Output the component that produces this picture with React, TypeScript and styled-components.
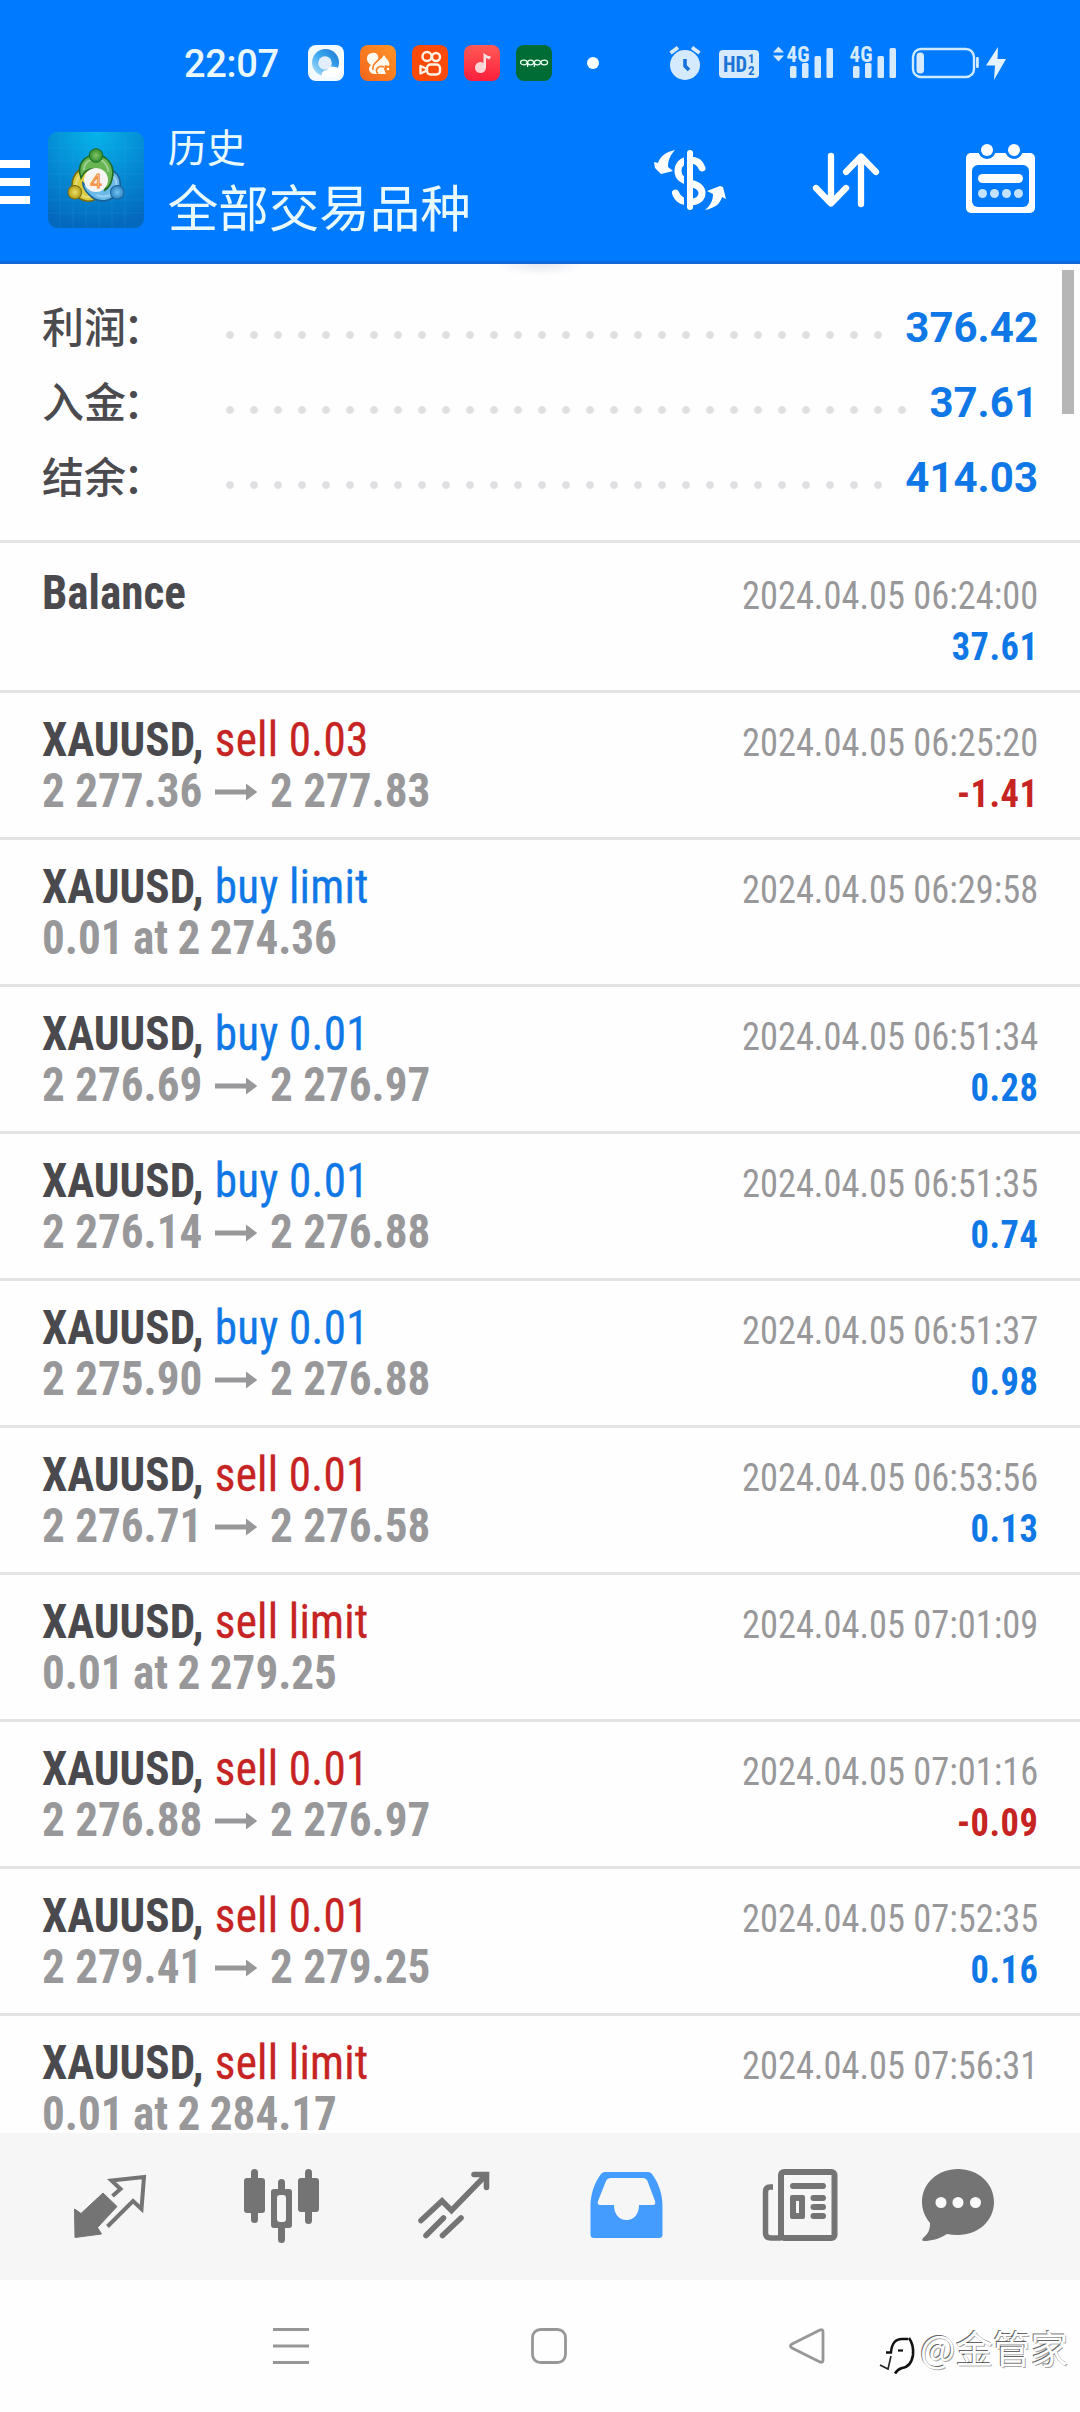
import React from "react";
import styled, { createGlobalStyle } from "styled-components";

const BLUE = "#007aff";
const LINK = "#0f78e6";
const RED = "#c62323";
const ICON = "#747474";

const GlobalStyle = createGlobalStyle`
  * { box-sizing: border-box; }
  body { margin: 0; background: #fff; }
  svg { display: block; flex: none; }
`;

const Screen = styled.div`
  width: 1080px;
  height: 2412px;
  display: flex;
  flex-direction: column;
  overflow: hidden;
  background: #fefefe;
  font-family: Roboto, "Noto Sans CJK SC", sans-serif;
`;

/* ---------- header ---------- */

const Header = styled.header`
  height: 264px;
  flex: none;
  background: ${BLUE};
  border-bottom: 3px solid #1268d6;
`;

const StatusBar = styled.div`
  height: 126px;
  display: flex;
  align-items: center;
  padding-left: 184px;
`;

const Clock = styled.span`
  width: 124px;
  font-size: 38px;
  font-weight: 500;
  letter-spacing: -0.3px;
  line-height: 44px;
  padding-top: 2px;
  color: #e9f8ff;
`;

const AppTray = styled.div`
  display: flex;
  gap: 16px;
`;

const MoreDot = styled.span`
  width: 12px;
  height: 12px;
  margin: 0 65px 0 35px;
  border-radius: 50%;
  background: #fff;
`;

const StatusIcons = styled.div`
  display: flex;
`;

const AppBar = styled.div`
  height: 135px;
  display: flex;
  align-items: flex-start;
  padding-top: 6px;
`;

const MenuButton = styled.div`
  width: 48px;
  height: 96px;
  display: flex;
  flex-direction: column;
  justify-content: center;
  gap: 10px;
  padding-top: 4px;
`;

const MenuBar = styled.span`
  width: 30px;
  height: 8px;
  background: #fff;
`;

const Titles = styled.div`
  width: 492px;
  padding-left: 24px;
  margin-top: -10px;
  color: #e9faff;
  font-family: "Noto Sans CJK SC", sans-serif;
`;

const Title = styled.div`
  font-size: 39px;
  line-height: 46px;
`;

const Subtitle = styled.div`
  font-size: 50.5px;
  line-height: 74px;
`;

const Actions = styled.div`
  display: flex;
`;

/* ---------- list ---------- */

const Content = styled.main`
  position: relative;
  height: 1869px;
  flex: none;
  overflow: hidden;
`;

const HeaderGlow = styled.div`
  position: absolute;
  top: 0;
  left: 495px;
  width: 90px;
  height: 12px;
  background: radial-gradient(ellipse at 50% 0, rgba(90, 100, 160, 0.14), transparent 70%);
`;

const Scrollbar = styled.div`
  position: absolute;
  top: 6px;
  right: 6px;
  width: 12px;
  height: 144px;
  background: #b6b6b6;
`;

const Summary = styled.section`
  height: 279px;
  padding: 26px 42px 0;
  border-bottom: 3px solid #e3e3e3;
`;

const SummaryRow = styled.div`
  height: 75px;
  display: flex;
  align-items: center;
`;

const SummaryLabel = styled.span`
  width: 176px;
  margin-top: -6px;
  font: 500 42px/60px "Noto Sans CJK SC", sans-serif;
  color: #4b4b4f;
`;

const Colon = styled.span`
  margin-left: -3px;
`;

const Leader = styled.span<{ $dots: number }>`
  width: ${(p) => p.$dots * 24}px;
  height: 24px;
  margin-top: 15px;
  background: radial-gradient(circle at 12px 12px, #dfdfe1 3.4px, transparent 4.4px) 0 0 / 24px 24px;
`;

const SummaryValue = styled.span`
  margin-left: auto;
  font-size: 42px;
  font-weight: 700;
  line-height: 51px;
  color: ${LINK};
`;

const Row = styled.section<{ $first?: boolean }>`
  height: ${(p) => (p.$first ? 150 : 147)}px;
  display: flex;
  justify-content: space-between;
  padding: ${(p) => (p.$first ? 24 : 21)}px 42px 0;
  border-bottom: 3px solid #e3e3e3;
  font-family: "Roboto Condensed", Roboto, sans-serif;
  white-space: nowrap;
`;

const Deal = styled.div`
  transform: scaleX(0.94);
  transform-origin: left;
`;

const Meta = styled.div`
  padding-top: 4px;
  text-align: right;
  transform: scaleX(0.934);
  transform-origin: right;
`;

const Symbol = styled.div`
  font-size: 48px;
  font-weight: 700;
  line-height: 51px;
  color: #4a4a4e;
`;

const Side = styled.span<{ $sell: boolean }>`
  margin-left: 1px;
  font-weight: 400;
  letter-spacing: 0.25px;
  color: ${(p) => (p.$sell ? RED : LINK)};
  -webkit-text-stroke: 0.3px currentColor;
`;

const Prices = styled.div`
  display: flex;
  align-items: center;
  font-size: 48px;
  font-weight: 700;
  line-height: 51px;
  color: #98989a;
`;

const Pending = styled.span`
  word-spacing: -1px;
`;

const Arrow = styled.svg`
  width: 45px;
  height: 18px;
  margin: 2px 13.5px 0;
`;

const DateText = styled.div`
  font-size: 39px;
  line-height: 51px;
  color: #98989a;
`;

const Profit = styled.div<{ $loss: boolean }>`
  font-size: 39px;
  font-weight: 700;
  letter-spacing: 0.5px;
  line-height: 51px;
  color: ${(p) => (p.$loss ? RED : LINK)};
`;

/* ---------- bottom ---------- */

const TabBar = styled.nav`
  height: 147px;
  flex: none;
  display: flex;
  padding-left: 24px;
  background: #f6f6f6;
`;

const SystemNav = styled.footer`
  height: 132px;
  flex: none;
  display: flex;
  align-items: flex-start;
  padding-top: 42px;
  background: #fefefe;
`;

const NavGroup = styled.div`
  width: 878px;
  display: flex;
  justify-content: space-between;
  padding: 0 50px 0 270px;
`;

const Watermark = styled.div`
  display: flex;
  align-items: center;
  height: 56px;
  margin-top: -3px;
  font: 400 37.5px/56px "Noto Sans CJK SC", sans-serif;
  color: #fff;
  white-space: nowrap;
  text-shadow: -1px -1px 0 rgba(0, 0, 0, 0.6), 1px 1px 0 rgba(0, 0, 0, 0.35);
`;

/* ---------- status bar icons ---------- */

const BrowserIcon = () => (
  <svg width="36" height="36" viewBox="0 0 36 36">
    <defs>
      <linearGradient id="ring" x1="0" y1="1" x2="1" y2="0">
        <stop offset="0" stopColor="#b9e6fb" />
        <stop offset="0.5" stopColor="#3fa9f0" />
        <stop offset="1" stopColor="#1775d2" />
      </linearGradient>
    </defs>
    <rect width="36" height="36" rx="8" fill="#f3fbff" />
    <circle cx="17.5" cy="17.5" r="13.500" fill="url(#ring)" />
    <circle cx="17" cy="18" r="6.800" fill="#e2effa" />
    <path d="M14 32a5 5 0 0 1 5-7a6 6 0 0 1 8-3a5 5 0 0 1 5 5a4 4 0 0 1-1 5z" fill="#fff" />
  </svg>
);

const SquirrelIcon = () => (
  <svg width="36" height="36" viewBox="0 0 36 36">
    <defs>
      <linearGradient id="uc" x1="0" y1="1" x2="1" y2="0">
        <stop offset="0" stopColor="#f4641c" />
        <stop offset="1" stopColor="#ff9526" />
      </linearGradient>
    </defs>
    <rect width="36" height="36" rx="8" fill="url(#uc)" />
    <path d="M14 29C8 28 8 22 11 20C5 17 6 8 12 8C18 6 20 13 17 17L22 13L24 10L26 13C29 16 30 18 29 21L25 20L24 24L26 29Z" fill="#fffaf0" />
    <path d="M13 25C12 19 16 18 20 13M18 29C14 24 19 20 24 22" stroke="#f9812a" strokeWidth="1.6" fill="none" />
    <circle cx="28" cy="24" r="1.3" fill="#fffaf0" />
  </svg>
);

const CameraIcon = () => (
  <svg width="36" height="36" viewBox="0 0 36 36">
    <rect width="36" height="36" rx="8" fill="#fb4a0a" />
    <g fill="none" stroke="#fff3e6" strokeWidth="2.4">
      <circle cx="15" cy="11.5" r="4.5" />
      <circle cx="24" cy="12" r="4" />
      <rect x="15" y="19.500" width="13" height="10" rx="3.500" />
      <path d="M8.500 21L14 23.500V26L8.500 28.500Z" strokeLinejoin="round" />
    </g>
  </svg>
);

const MusicIcon = () => (
  <svg width="36" height="36" viewBox="0 0 36 36">
    <defs>
      <linearGradient id="mus" x1="0" y1="0" x2="0" y2="1">
        <stop offset="0" stopColor="#ff5a56" />
        <stop offset="1" stopColor="#fb1f3c" />
      </linearGradient>
    </defs>
    <rect width="36" height="36" rx="8" fill="url(#mus)" />
    <circle cx="16.500" cy="22.500" r="5.500" fill="#ffd3d3" />
    <path d="M19.500 23V7.500C21 10 24 11 27 11.500L25.500 14.500L22 13V23Z" fill="#ffe0e0" />
  </svg>
);

const OppoIcon = () => (
  <svg width="36" height="36" viewBox="0 0 36 36">
    <rect width="36" height="36" rx="8" fill="#006c35" />
    <g fill="none" stroke="#e8fff0" strokeWidth="1.200">
      <ellipse cx="7.800" cy="17.500" rx="3.300" ry="2.300" />
      <ellipse cx="14.600" cy="17.500" rx="3" ry="2.300" />
      <ellipse cx="21.400" cy="17.500" rx="3" ry="2.300" />
      <ellipse cx="28.300" cy="17.500" rx="3.300" ry="2.300" />
      <path d="M11.600 17.500V22M18.400 17.500V22" />
    </g>
  </svg>
);

const TINT = "#d6eafd";

const AlarmIcon = () => (
  <svg width="50" height="46" viewBox="664 40 50 46">
    <circle cx="685" cy="65" r="15" fill={TINT} />
    <path d="M670.500 53L678 47.500M699.500 53L692 47.500" stroke={TINT} strokeWidth="3.800" />
    <path d="M685 59V66L689 70" stroke="#1571d9" strokeWidth="3.600" fill="none" />
  </svg>
);

const HdIcon = () => (
  <svg width="56" height="46" viewBox="714 40 56 46">
    <rect x="719" y="50" width="40" height="28" rx="4" fill={TINT} />
    <g fill="#1b74d8" fontFamily="Roboto Condensed, Roboto, sans-serif" fontWeight="700">
      <text x="723" y="72" fontSize="22" textLength="24" lengthAdjust="spacingAndGlyphs">HD</text>
      <text x="748" y="63" fontSize="13">1</text>
      <text x="748" y="75" fontSize="13">2</text>
    </g>
  </svg>
);

const SignalIcon = ({ data }: { data?: boolean }) => (
  <svg width={data ? 75 : 62} height="46" viewBox={data ? "770 40 75 46" : "782 40 62 46"}>
    {data && <path d="M773 52.500L778.500 46.500L784 52.500ZM773 55.500L778.500 61.500L784 55.500Z" fill={TINT} />}
    <text x="786.500" y="61.500" fontSize="22" fontWeight="700" fontFamily="Roboto Condensed, Roboto, sans-serif" textLength="23" lengthAdjust="spacingAndGlyphs" fill={TINT}>4G</text>
    <g fill={TINT}>
      <rect x="790" y="66" width="6.500" height="12" rx="1.500" />
      <rect x="802" y="63" width="6.500" height="15" rx="1.500" />
      <rect x="814.500" y="56" width="6.500" height="22" rx="1.500" />
      <rect x="826.500" y="48" width="6.500" height="30" rx="1.500" />
    </g>
  </svg>
);

const BatteryIcon = () => (
  <svg width="105" height="46" viewBox="907 40 105 46">
    <rect x="913" y="49" width="61" height="28" rx="8" fill="none" stroke="#cdeaff" strokeWidth="2.400" />
    <rect x="976" y="57" width="2.800" height="11" rx="1" fill={TINT} />
    <rect x="916.500" y="52.500" width="7.500" height="21" rx="3.500" fill={TINT} />
    <path d="M998 47L986 65.500H995L994 80L1006 59H997.500Z" fill="#e4f3ff" />
  </svg>
);

/* ---------- app bar icons ---------- */

const Person = ({ rotate, body, edge, head }: { rotate: number; body: string; edge: string; head: string }) => (
  <g transform={`rotate(${rotate} 48 48)`}>
    <path d="M33 46C28 32 37 23 48 23C59 23 68 34 64 47C63 52 60 56 57 58C59 48 56 40 49 37C42 36 36 39 33 46Z" fill={body} stroke={edge} strokeWidth="1.600" />
    <path d="M36 38C36 30 42 27 48 27C55 27 60 33 60.500 40" fill="none" stroke="#fff" strokeOpacity="0.35" strokeWidth="2" />
    <circle cx="48" cy="23.500" r="6.800" fill={head} stroke={edge} strokeWidth="1" />
  </g>
);

const MetaLogo = () => (
  <svg width="96" height="96" viewBox="0 0 96 96">
    <defs>
      <radialGradient id="logobg" cx="0.5" cy="0" r="1">
        <stop offset="0" stopColor="#06b4ea" />
        <stop offset="0.55" stopColor="#0589d3" />
        <stop offset="1" stopColor="#0468bd" />
      </radialGradient>
      <radialGradient id="green"><stop offset="0" stopColor="#86c765" /><stop offset="1" stopColor="#2b8a2e" /></radialGradient>
      <radialGradient id="gold"><stop offset="0" stopColor="#ece16a" /><stop offset="1" stopColor="#b29a13" /></radialGradient>
      <radialGradient id="sky"><stop offset="0" stopColor="#75c4f0" /><stop offset="1" stopColor="#2c82c4" /></radialGradient>
    </defs>
    <rect width="96" height="96" rx="9" fill="url(#logobg)" />
    <path d="M12 0V96M25 0V96M38 0V96M51 0V96M64 0V96M77 0V96M0 16H96M0 29H96M0 42H96M0 55H96M0 68H96M0 81H96" stroke="#35b0ea" strokeOpacity="0.16" />
    <Person rotate={240} body="#dccb3a" edge="#766a14" head="url(#gold)" />
    <Person rotate={120} body="#6bb9e8" edge="#1a6297" head="url(#sky)" />
    <Person rotate={0} body="#67b553" edge="#1f6b25" head="url(#green)" />
    <circle cx="48" cy="48" r="12" fill="#f6f4f2" />
    <text x="48" y="55.500" textAnchor="middle" fontSize="21" fontFamily="Liberation Sans, sans-serif" fill="#ffd9ac" stroke="#f18a35" strokeWidth="1">4</text>
  </svg>
);

const CurrencyIcon = () => (
  <svg width="132" height="96" viewBox="633 132 132 96">
    <path d="M702 168C700 162 696 160 690 160C681 160 678 166 678 171C678 178 683 180 690 183C698 185 702 188 702 193C702 199 697 202 690 202C683 202 678 200 675.500 193" fill="none" stroke="#fff" strokeWidth="7" strokeLinecap="round" />
    <path d="M684 152H687V210H684Z" fill={BLUE} />
    <path d="M690 153V207" stroke="#fff" strokeWidth="6" strokeLinecap="round" />
    <path d="M675 150C665 152 660 157 658 163L654 162L655 168L661 174L673 171L668 167C668 161 670 155 675 150Z" fill="#fff" />
    <path d="M705 210C715 208 720 204 722 197L726 199L723 187L720 186L707 191L713 194C713 201 710 206 705 210Z" fill="#fff" />
  </svg>
);

const SortIcon = () => (
  <svg width="165" height="96" viewBox="765 132 165 96">
    <path d="M831 156V203M816 188L831 203.500L846 188M861 204V157M846 172L861 156.500L876 172" fill="none" stroke="#fff" strokeWidth="6.300" strokeLinecap="round" strokeLinejoin="round" />
  </svg>
);

const CalendarIcon = () => (
  <svg width="150" height="96" viewBox="930 132 150 96">
    <rect x="966" y="153" width="69" height="60" rx="5" fill="#fff" />
    <rect x="972" y="165" width="57" height="42" rx="6" fill={BLUE} />
    <path d="M978 150a9 9 0 0 0 18 0zM1005 150a9 9 0 0 0 18 0z" fill={BLUE} />
    <path d="M978 149h18v4h-18zM1005 149h18v4h-18z" fill={BLUE} />
    <circle cx="987" cy="150" r="6" fill="#fff" />
    <circle cx="1014" cy="150" r="6" fill="#fff" />
    <rect x="978" y="174" width="45" height="9" rx="4.500" fill="#fff" />
    {[982.5, 994.5, 1006.5, 1018.5].map((x) => (
      <circle key={x} cx={x} cy="193.500" r="4.500" fill="#c4e2ff" />
    ))}
  </svg>
);

/* ---------- tab icons, drawn on a shared bar-wide grid ---------- */

const tabs = [
  <>
    <path d="M74.500 2209L81 2213.500L103 2193L117 2206.500L97.500 2227.500L101.500 2234L75 2237.500Z" fill={ICON} stroke={ICON} strokeWidth="1" strokeLinejoin="round" />
    <path d="M112.500 2196L120.500 2189L111.500 2180.500L144 2177L141.500 2209L133 2201L107.500 2226.500" fill="none" stroke={ICON} strokeWidth="4" />
  </>,
  <>
    <g fill={ICON}>
      <rect x="244" y="2178" width="21" height="35" rx="3" />
      <rect x="251" y="2169" width="7" height="54" rx="3.500" />
      <rect x="298" y="2178" width="21" height="34" rx="3" />
      <rect x="305" y="2169" width="7" height="55" rx="3.500" />
      <rect x="271" y="2189" width="21" height="39" rx="3" />
      <rect x="278" y="2179" width="7" height="64" rx="3.500" />
    </g>
    <rect x="277" y="2195" width="9" height="27" rx="3" fill="#f6f6f6" />
  </>,
  <path d="M421 2220.500L442 2201L451.500 2210.500L486 2175M474 2174.500H486.500V2187.500M426 2235.500L443.500 2218M442.500 2235.500L461 2218" fill="none" stroke={ICON} strokeWidth="5.600" strokeLinecap="round" />,
  <path fillRule="evenodd" fill="#459cff" d="M605 2172H648C650 2172 651 2173 652 2174C658 2182 662.500 2193 662.500 2206V2234.500Q662.500 2238 659 2238H594Q590.500 2238 590.500 2234.500V2206C590.500 2193 595 2182 601 2174C602 2173 603 2172 605 2172ZM611 2178Q607.500 2178 606 2181L598 2201Q597 2205 600 2205H614C614 2214 619 2220 626.500 2220C634 2220 639 2214 639 2205H653Q656 2205 655 2201L647.500 2181Q646 2178 643 2178Z" />,
  <g fill={ICON}>
    <rect x="781" y="2172" width="53.500" height="66" rx="3" fill="none" stroke={ICON} strokeWidth="6" />
    <path d="M773 2187H770Q765.500 2187 765.500 2192V2233Q765.500 2238 771 2238H781" fill="none" stroke={ICON} strokeWidth="5.500" />
    <rect x="790" y="2183" width="36" height="6" rx="3" />
    <path fillRule="evenodd" d="M792 2195H803Q805 2195 805 2197V2217Q805 2219 803 2219H792Q790 2219 790 2217V2197Q790 2195 792 2195ZM796 2201V2213H799V2201Z" />
    <rect x="810.500" y="2195" width="15.500" height="6" rx="3" />
    <rect x="810.500" y="2204" width="15.500" height="6" rx="3" />
    <rect x="810.500" y="2213" width="15.500" height="6" rx="3" />
  </g>,
  <>
    <path fill={ICON} d="M958 2169C978 2169 994 2183 994 2202C994 2221 978 2235 958 2235Q952 2235 947 2234C939 2239 931 2241 924 2241Q921 2241 923 2238C929 2233 930 2229 930 2223C925 2217 922 2210 922 2202C922 2183 938 2169 958 2169Z" />
    {[941, 958, 975.5].map((x) => (
      <circle key={x} cx={x} cy="2202.500" r="5.500" fill="#fafafa" />
    ))}
  </>,
];

/* ---------- data ---------- */

type Entry = { side: string; open?: string; close?: string; pending?: string; time: string; profit?: string };

const entries: Entry[] = [
  { side: "sell 0.03", open: "2 277.36", close: "2 277.83", time: "2024.04.05 06:25:20", profit: "-1.41" },
  { side: "buy limit", pending: "0.01 at 2 274.36", time: "2024.04.05 06:29:58" },
  { side: "buy 0.01", open: "2 276.69", close: "2 276.97", time: "2024.04.05 06:51:34", profit: "0.28" },
  { side: "buy 0.01", open: "2 276.14", close: "2 276.88", time: "2024.04.05 06:51:35", profit: "0.74" },
  { side: "buy 0.01", open: "2 275.90", close: "2 276.88", time: "2024.04.05 06:51:37", profit: "0.98" },
  { side: "sell 0.01", open: "2 276.71", close: "2 276.58", time: "2024.04.05 06:53:56", profit: "0.13" },
  { side: "sell limit", pending: "0.01 at 2 279.25", time: "2024.04.05 07:01:09" },
  { side: "sell 0.01", open: "2 276.88", close: "2 276.97", time: "2024.04.05 07:01:16", profit: "-0.09" },
  { side: "sell 0.01", open: "2 279.41", close: "2 279.25", time: "2024.04.05 07:52:35", profit: "0.16" },
  { side: "sell limit", pending: "0.01 at 2 284.17", time: "2024.04.05 07:56:31" },
];

const totals = [
  { label: "利润", dots: 28, value: "376.42" },
  { label: "入金", dots: 29, value: "37.61" },
  { label: "结余", dots: 28, value: "414.03" },
];

export default function App() {
  return (
    <Screen>
      <GlobalStyle />
      <Header>
        <StatusBar>
          <Clock>22:07</Clock>
          <AppTray>
            <BrowserIcon />
            <SquirrelIcon />
            <CameraIcon />
            <MusicIcon />
            <OppoIcon />
          </AppTray>
          <MoreDot />
          <StatusIcons>
            <AlarmIcon />
            <HdIcon />
            <SignalIcon data />
            <SignalIcon />
            <BatteryIcon />
          </StatusIcons>
        </StatusBar>
        <AppBar>
          <MenuButton>
            <MenuBar />
            <MenuBar />
            <MenuBar />
          </MenuButton>
          <MetaLogo />
          <Titles>
            <Title>历史</Title>
            <Subtitle>全部交易品种</Subtitle>
          </Titles>
          <Actions>
            <CurrencyIcon />
            <SortIcon />
            <CalendarIcon />
          </Actions>
        </AppBar>
      </Header>

      <Content>
        <HeaderGlow />
        <Scrollbar />
        <Summary>
          {totals.map((t) => (
            <SummaryRow key={t.label}>
              <SummaryLabel>
                {t.label}
                <Colon>：</Colon>
              </SummaryLabel>
              <Leader $dots={t.dots} />
              <SummaryValue>{t.value}</SummaryValue>
            </SummaryRow>
          ))}
        </Summary>
        <Row $first>
          <Deal>
            <Symbol>Balance</Symbol>
          </Deal>
          <Meta>
            <DateText>2024.04.05 06:24:00</DateText>
            <Profit $loss={false}>37.61</Profit>
          </Meta>
        </Row>
        {entries.map((e) => (
          <Row key={e.time}>
            <Deal>
              <Symbol>
                XAUUSD, <Side $sell={e.side.startsWith("sell")}>{e.side}</Side>
              </Symbol>
              <Prices>
                {e.pending ? (
                  <Pending>{e.pending}</Pending>
                ) : (
                  <>
                    <span>{e.open}</span>
                    <Arrow viewBox="0 0 45 18" preserveAspectRatio="none">
                      <path d="M0 6.500H33V0.500L45 9L33 17.500V11.500H0Z" fill="#98989a" />
                    </Arrow>
                    <span>{e.close}</span>
                  </>
                )}
              </Prices>
            </Deal>
            <Meta>
              <DateText>{e.time}</DateText>
              {e.profit && <Profit $loss={e.profit.startsWith("-")}>{e.profit}</Profit>}
            </Meta>
          </Row>
        ))}
      </Content>

      <TabBar>
        {tabs.map((icon, i) => (
          <svg key={i} width="172" height="147" viewBox={`${24 + i * 172} 2133 172 147`}>
            {icon}
          </svg>
        ))}
      </TabBar>

      <SystemNav>
        <NavGroup>
          <svg width="42" height="48" viewBox="0 0 42 48">
            <path d="M3 7.500H39M3 24H39M3 40.500H39" stroke="#979797" strokeWidth="3" />
          </svg>
          <svg width="42" height="48" viewBox="0 0 42 48">
            <rect x="4.500" y="7.500" width="33" height="33" rx="8" fill="none" stroke="#979797" strokeWidth="2.800" />
          </svg>
          <svg width="42" height="48" viewBox="0 0 42 48">
            <path d="M34 8L6 22Q3 24 6 26L34 40Q37 41 37 38V10Q37 7 34 8Z" fill="none" stroke="#979797" strokeWidth="2.800" strokeLinejoin="round" />
          </svg>
        </NavGroup>
        <Watermark>
          <svg width="42" height="56" viewBox="878 2320 42 56">
            <path d="M886 2353.500H891Q892 2340 902 2340H908" fill="none" stroke="#111" strokeWidth="2.400" />
            <path d="M898 2351.500H903" stroke="#111" strokeWidth="2.200" />
            <path d="M909 2339Q914 2346 913 2356Q911 2368 902 2369Q898 2370 895 2374.500" fill="none" stroke="#111" strokeWidth="2.600" />
            <path d="M891 2357L888 2370L880 2366" fill="none" stroke="#222" strokeWidth="1.600" />
          </svg>
          <span>@金管家</span>
        </Watermark>
      </SystemNav>
    </Screen>
  );
}
